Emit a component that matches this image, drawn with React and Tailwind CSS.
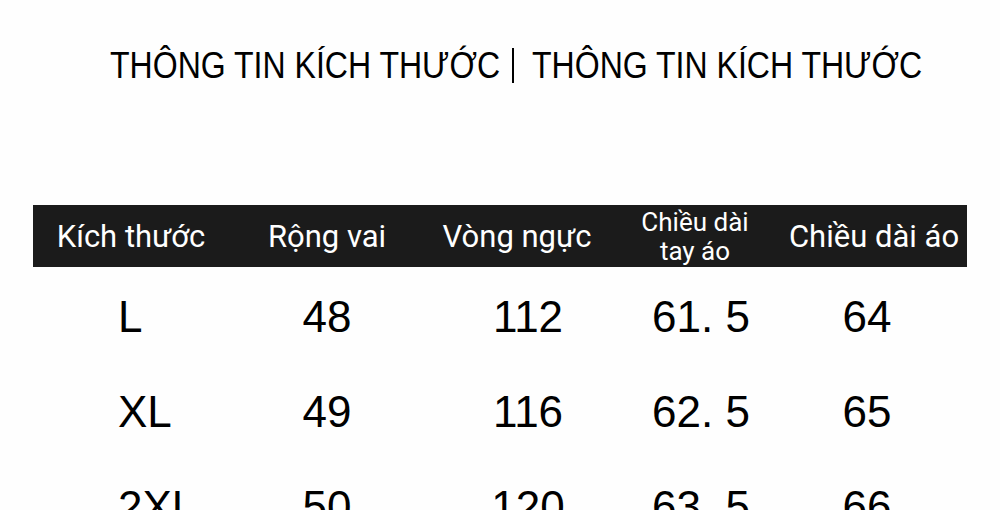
const headers = [
  { label: 'Kích thước', w: 'w-[196px]' },
  { label: 'Rộng vai', w: 'w-[196px]' },
  { label: 'Vòng ngực', w: 'w-[184px]' },
  { label: 'Chiều dài tay áo', w: 'w-[172px]', twoLine: true },
  { label: 'Chiều dài áo', w: 'w-[186px]' },
];

const rows = [
  ['L', '48', '112', '61. 5', '64'],
  ['XL', '49', '116', '62. 5', '65'],
  ['2XL', '50', '120', '63. 5', '66'],
];

const narrow = "font-['Liberation_Sans_Narrow','Arial_Narrow','Liberation_Sans',sans-serif]";

function TitleHalf({ children }) {
  return (
    <span className="inline-block w-[387px] whitespace-nowrap">
      <span className="inline-block origin-left [transform:scaleX(0.89)]">{children}</span>
    </span>
  );
}

export default function App() {
  return (
    <div className="w-[1000px] h-[510px] overflow-hidden bg-[#fefefe] text-black">
      <div className={`pt-[45px] pl-[110px] flex items-start text-[36px] leading-[42px] ${narrow}`}>
        <TitleHalf>THÔNG TIN KÍCH THƯỚC</TitleHalf>
        <span className="ml-[15px] mt-[3px] w-[2px] h-[35px] bg-black"></span>
        <span className="ml-[18px]">
          <TitleHalf>THÔNG TIN KÍCH THƯỚC</TitleHalf>
        </span>
      </div>

      <div className="mt-[118px] ml-[33px] w-[934px] h-[62px] bg-[#1b1b1b] flex text-white font-['Roboto',sans-serif]">
        {headers.map((h) => (
          <div key={h.label} className={`${h.w} flex items-center justify-center text-center`}>
            {h.twoLine ? (
              <div className="flex flex-col items-center text-[26px] leading-[29px] pt-[2px]">
                <span>Chiều dài</span>
                <span>tay áo</span>
              </div>
            ) : (
              <span className="text-[31px] leading-none">{h.label}</span>
            )}
          </div>
        ))}
      </div>

      <div className={`ml-[33px] w-[934px] ${narrow} text-[44px] leading-none`}>
        {rows.map((r) => (
          <div key={r[0]} className="flex h-[95px] items-center pt-[4px]">
            <div className="w-[196px] pl-[85px]">{r[0]}</div>
            <div className="w-[196px] text-center">{r[1]}</div>
            <div className="w-[184px] text-center pl-[22px]">{r[2]}</div>
            <div className="w-[172px] text-center pl-[12px]">{r[3]}</div>
            <div className="w-[186px] text-center pr-[14px]">{r[4]}</div>
          </div>
        ))}
      </div>
    </div>
  );
}
